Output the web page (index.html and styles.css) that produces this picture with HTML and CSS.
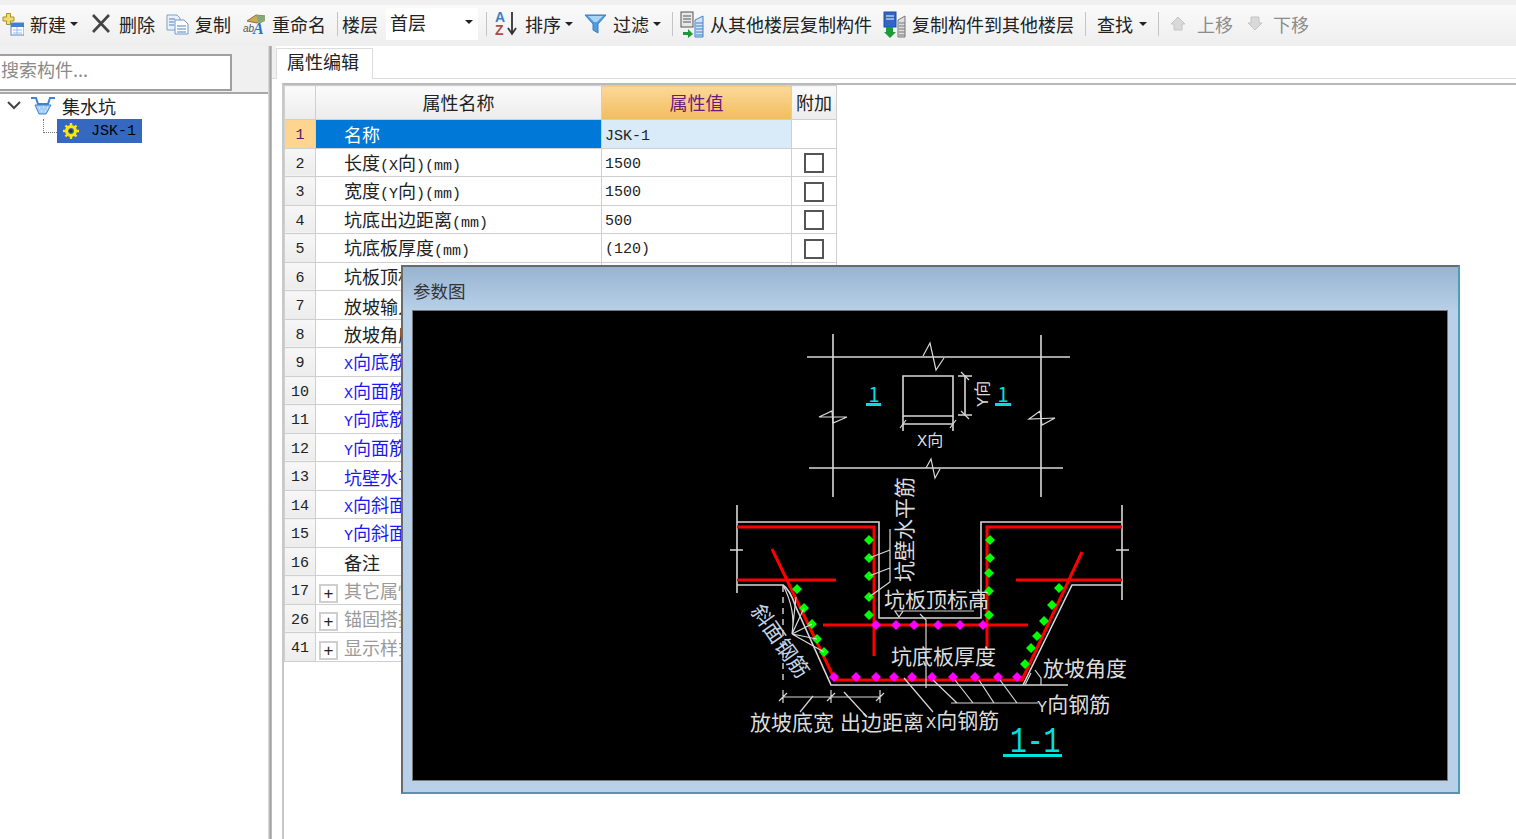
FILE: index.html
```html
<!DOCTYPE html>
<html lang="zh-CN">
<head>
  <meta charset="UTF-8" />
  <title>属性编辑</title>
  <link rel="stylesheet" href="styles.css">
</head>
<body>
  <div class="toolbar">
    <div class="tool">
      <svg width="22" height="26" viewBox="0 0 22 26"><path d="M1 6h3.500V2.500h4V6H12v4H8.500v3.500h-4V10H1z" fill="#f4dc6a" stroke="#a89030"/><rect x="9" y="12" width="13" height="12" fill="#fff" stroke="#5b8ccb"/><rect x="9" y="12" width="13" height="4" fill="#3f83d0"/><path d="M11 19h9M11 22h9M15 16v8" stroke="#9bbbe0"/></svg>
      <span>新建</span><i class="caret"></i>
    </div>
    <div class="tool tool-del">
      <svg width="22" height="26" viewBox="0 0 22 26"><path d="M2 4l16 17M18 4L2 21" stroke="#444" stroke-width="2.6" fill="none"/></svg>
      <span>删除</span>
    </div>
    <div class="tool">
      <svg width="23" height="26" viewBox="0 0 23 26"><path d="M1 4h10l3 3v12H1z" fill="#eaf1fa" stroke="#7da0cc"/><path d="M9 9h9l4 4v10H9z" fill="#fff" stroke="#6f96c8"/><path d="M11 15h9M11 18h9M11 21h9M3 8h6M3 11h5M3 14h5" stroke="#4b83c8"/></svg>
      <span>复制</span>
    </div>
    <div class="tool tool-ren">
      <svg width="23" height="26" viewBox="0 0 23 26"><path d="M4 10l9-6 9 1-8 7z" fill="#cda95a" stroke="#8c7030"/><path d="M13 4l9 1v5l-6 3z" fill="#8aa878"/><text x="0" y="21" class="ico-ab">ab</text><text x="10" y="23" class="ico-a">A</text></svg>
      <span>重命名</span>
    </div>
    <i class="sep"></i>
    <span class="floor-label">楼层</span>
    <div class="floor-select"><span>首层</span><i class="caret"></i></div>
    <i class="sep"></i>
    <div class="tool tool-sort">
      <svg width="25" height="28" viewBox="0 0 25 28"><text x="1" y="12" class="ico-az ico-az-a">A</text><text x="1" y="25" class="ico-az ico-az-z">Z</text><path d="M18 2v21M14 18l4 6 4-6" stroke="#333" stroke-width="1.8" fill="none"/></svg>
      <span>排序</span><i class="caret"></i>
    </div>
    <div class="tool">
      <svg width="23" height="26" viewBox="0 0 23 26"><path d="M1 4h21l-8 9v9l-5-3v-6z" fill="#4f9be0" stroke="#3b7fc4"/><path d="M4 5h15l-6 6h-3z" fill="#a8d4f5"/></svg>
      <span>过滤</span><i class="caret"></i>
    </div>
    <i class="sep sep-tight"></i>
    <div class="tool tool-gap">
      <svg width="24" height="28" viewBox="0 0 24 28"><rect x="1" y="2" width="12" height="15" fill="#e8e8e8" stroke="#555"/><path d="M3 6h8M3 9h8M3 12h8" stroke="#555"/><path d="M3 22h5v-3l5 5-5 4v-3H3z" fill="#1f9a3a"/><path d="M15 10l8-4v21h-8zM16 13h7M16 16h7M16 19h7M16 22h7M16 25h7" fill="#cfe2f5" stroke="#3f83c8"/></svg>
      <span>从其他楼层复制构件</span>
    </div>
    <div class="tool">
      <svg width="23" height="28" viewBox="0 0 23 28"><rect x="1" y="2" width="12" height="15" fill="#2f66c8" stroke="#234f9c"/><path d="M3 6h8M3 9h8" stroke="#fff"/><path d="M3 17h7v5h3l-6 6-6-6h2z" fill="#1f9a3a"/><path d="M15 10l7-4v21h-7zM16 13h6M16 16h6M16 19h6M16 22h6M16 25h6" fill="#ddd" stroke="#777"/></svg>
      <span>复制构件到其他楼层</span>
    </div>
    <i class="sep"></i>
    <div class="tool tool-find"><span>查找</span><i class="caret"></i></div>
    <i class="sep"></i>
    <div class="tool off tool-up">
      <svg width="20" height="26" viewBox="0 0 20 26"><path d="M0 13l7-7 7 7h-3v6H3v-6z" fill="#d9d9d9" stroke="#c4c4c4"/></svg>
      <span>上移</span>
    </div>
    <div class="tool off tool-down">
      <svg width="19" height="26" viewBox="0 0 19 26"><path d="M3 6h8v6h3l-7 7-7-7h3z" fill="#d9d9d9" stroke="#c4c4c4"/></svg>
      <span>下移</span>
    </div>
  </div>

  <div class="main">
    <div class="side">
      <div class="search-row"><div class="search-box">搜索构件...</div></div>
      <div class="tree">
        <div class="tree-root">
          <svg class="tree-arrow" width="14" height="10" viewBox="0 0 14 10"><path d="M1 1l6 6 6-6" stroke="#444" stroke-width="2" fill="none"/></svg>
          <svg width="26" height="24" viewBox="0 0 26 24"><path d="M1 4h5l2 6h10l2-6h5" stroke="#3f83d0" stroke-width="2" fill="none"/><path d="M5 11h16l-5 9H9z" fill="#a9cdf0" stroke="#3f83d0"/><path d="M9 14h1M13 13h1M17 14h1M11 17h1M15 17h1" stroke="#fff"/></svg>
          <span>集水坑</span>
        </div>
        <div class="tree-child">
          <i class="tree-dots"></i>
          <div class="tree-sel">
            <svg width="18" height="18" viewBox="0 0 18 18"><circle cx="9" cy="9" r="4.5" fill="none" stroke="#ffe800" stroke-width="3"/><path d="M9 1v3M9 14v3M1 9h3M14 9h3M3.5 3.5l2 2M12.500 12.500l2 2M14.500 3.500l-2 2M5.500 12.500l-2 2" stroke="#ffe800" stroke-width="2.400"/><circle cx="9" cy="9" r="1.800" fill="#333"/></svg>
            <span class="lat">JSK-1</span>
          </div>
        </div>
      </div>
    </div>
    <div class="splitter"></div>

    <div class="content">
      <div class="tabs"><div class="tab">属性编辑</div></div>
      <div class="sheet">
        <table class="grid">
          <colgroup><col class="c-no"><col class="c-name"><col class="c-val"><col class="c-add"></colgroup>
          <thead>
            <tr><th></th><th>属性名称</th><th class="th-active">属性值</th><th>附加</th></tr>
          </thead>
          <tbody>
            <tr class="row-on"><td class="no">1</td><td class="name">名称</td><td class="val"><span class="lat">JSK-1</span></td><td></td></tr>
            <tr><td class="no">2</td><td class="name">长度<span class="lat">(X</span>向<span class="lat">)(mm)</span></td><td class="val lat">1500</td><td class="chk"><i class="box"></i></td></tr>
            <tr><td class="no">3</td><td class="name">宽度<span class="lat">(Y</span>向<span class="lat">)(mm)</span></td><td class="val lat">1500</td><td class="chk"><i class="box"></i></td></tr>
            <tr><td class="no">4</td><td class="name">坑底出边距离<span class="lat">(mm)</span></td><td class="val lat">500</td><td class="chk"><i class="box"></i></td></tr>
            <tr><td class="no">5</td><td class="name">坑底板厚度<span class="lat">(mm)</span></td><td class="val lat">(120)</td><td class="chk"><i class="box"></i></td></tr>
            <tr><td class="no">6</td><td class="name">坑板顶标高<span class="lat">(m)</span></td><td></td><td></td></tr>
            <tr><td class="no">7</td><td class="name">放坡输入方式</td><td></td><td></td></tr>
            <tr><td class="no">8</td><td class="name">放坡角度</td><td></td><td></td></tr>
            <tr class="blue"><td class="no">9</td><td class="name"><span class="lat">X</span>向底筋</td><td></td><td></td></tr>
            <tr class="blue"><td class="no">10</td><td class="name"><span class="lat">X</span>向面筋</td><td></td><td></td></tr>
            <tr class="blue"><td class="no">11</td><td class="name"><span class="lat">Y</span>向底筋</td><td></td><td></td></tr>
            <tr class="blue"><td class="no">12</td><td class="name"><span class="lat">Y</span>向面筋</td><td></td><td></td></tr>
            <tr class="blue"><td class="no">13</td><td class="name">坑壁水平筋</td><td></td><td></td></tr>
            <tr class="blue"><td class="no">14</td><td class="name"><span class="lat">X</span>向斜面钢筋</td><td></td><td></td></tr>
            <tr class="blue"><td class="no">15</td><td class="name"><span class="lat">Y</span>向斜面钢筋</td><td></td><td></td></tr>
            <tr><td class="no">16</td><td class="name">备注</td><td></td><td></td></tr>
            <tr class="group"><td class="no">17</td><td class="name-g"><i class="plus">+</i>其它属性</td><td></td><td></td></tr>
            <tr class="group"><td class="no">26</td><td class="name-g"><i class="plus">+</i>锚固搭接</td><td></td><td></td></tr>
            <tr class="group"><td class="no">41</td><td class="name-g"><i class="plus">+</i>显示样式</td><td></td><td></td></tr>
          </tbody>
        </table>
      </div>
    </div>
  </div>

  <!-- 参数图 floats over the grid -->
  <div class="dialog">
    <div class="dialog-title">参数图</div>
    <div class="canvas">
      <svg width="1034" height="470" viewBox="413 311 1034 470">
        <g class="w1">
          <path d="M807 357H1070M809 468H1063M833 334V497M1041 335V497"/>
          <path d="M903 376H953V416H903Z"/>
          <path d="M903 416V431M953 416V431M903 424H953M958 376H972M958 415H972M965 376V415"/>
        </g>
        <g class="w2">
          <path d="M923 356L930 343L936 370L944 358M926 468L931 459L935 478L940 469"/>
          <path d="M819 417L832 411L833 423L847 417ZM1029 419L1040 411L1042 425L1055 418Z"/>
          <path d="M900 428L906 420M950 428L956 420M961 372L969 380M961 411L969 419"/>
        </g>
        <text x="917" y="446" class="t16"><tspan class="lat-cad">X</tspan>向</text>
        <text transform="translate(988 407) rotate(-90)" class="t16"><tspan class="lat-cad">Y</tspan>向</text>

        <text x="874" y="402" class="cyan t20" text-anchor="middle">1</text>
        <rect x="866" y="403" width="15" height="3" class="cyan-f"/>
        <text x="1003" y="402" class="cyan t20" text-anchor="middle">1</text>
        <rect x="995" y="403" width="16" height="3" class="cyan-f"/>

        <!-- concrete outline -->
        <g class="w1">
          <path d="M737 505V593M1122 505V600M730 550H743M1116 550H1129"/>
          <path d="M737 522H879V618H981V522H1122"/>
          <path d="M737 585H783Q790 590 795 605L831 685H1068M1023 685L1072 585H1122"/>
        </g>
        <path class="dash" d="M783 586V685"/>

        <!-- rebar -->
        <g class="red">
          <path d="M737 527H874V656M737 580H836M772 549L835 680H1022L1082 552"/>
          <path d="M823 625H1028M1122 527H987V648M1016 580H1122"/>
        </g>

        <g class="green">
          <path d="M869 535l5 5-5 5-5-5zM869 553l5 5-5 5-5-5zM869 571l5 5-5 5-5-5zM869 592l5 5-5 5-5-5zM869 610l5 5-5 5-5-5z"/>
          <path d="M797 584l5 5-5 5-5-5zM804 603l5 5-5 5-5-5zM812 619l5 5-5 5-5-5zM817 634l5 5-5 5-5-5zM824 647l5 5-5 5-5-5z"/>
          <path d="M990 535l5 5-5 5-5-5zM990 553l5 5-5 5-5-5zM989 568l5 5-5 5-5-5zM989 586l5 5-5 5-5-5zM989 610l5 5-5 5-5-5z"/>
          <path d="M1059 583l5 5-5 5-5-5zM1052 600l5 5-5 5-5-5zM1044 616l5 5-5 5-5-5zM1037 631l5 5-5 5-5-5zM1031 643l5 5-5 5-5-5zM1025 659l5 5-5 5-5-5z"/>
        </g>
        <g class="pink">
          <path d="M876 620l5 5-5 5-5-5zM896 620l5 5-5 5-5-5zM914 620l5 5-5 5-5-5zM938 620l5 5-5 5-5-5zM960 620l5 5-5 5-5-5zM983 620l5 5-5 5-5-5z"/>
          <path d="M834 672l5 5-5 5-5-5zM856 672l5 5-5 5-5-5zM876 672l5 5-5 5-5-5zM894 672l5 5-5 5-5-5zM912 672l5 5-5 5-5-5zM932 672l5 5-5 5-5-5zM953 672l5 5-5 5-5-5zM975 672l5 5-5 5-5-5zM998 672l5 5-5 5-5-5zM1017 672l5 5-5 5-5-5z"/>
        </g>

        <!-- leaders and dimensions -->
        <g class="w2">
          <path d="M890 529V582L869 597M890 550L869 558M890 568L869 576"/>
          <path d="M895 611H974M895 611L903 611L899 617ZM920 614L926 620V688"/>
          <path d="M792 634L796 597M792 634L804 608M792 634L812 624M792 634L817 639M792 634L824 652M783 585Q796 610 792 634"/>
          <path d="M783 697H880M783 690V703M831 690V703M880 690V703M779 701L787 693M827 701L835 693M876 701L884 693"/>
          <path d="M800 712L813 696M867 717L844 692"/>
          <path d="M904 678L933 712M951 703H1038M933 680L957 703M955 680L973 703M979 680L994 703M1000 680L1017 703"/>
          <path d="M1035 670L1041 678V685M1025 685L1031 673"/>
        </g>

        <text transform="translate(912 582) rotate(-90)" class="t21">坑壁水平筋</text>
        <text x="884" y="607" class="t21">坑板顶标高</text>
        <text x="891" y="664" class="t21">坑底板厚度</text>
        <text x="1043" y="676" class="t21">放坡角度</text>
        <text x="1037" y="712" class="t21"><tspan class="lat-cad">Y</tspan>向钢筋</text>
        <text x="926" y="728" class="t21"><tspan class="lat-cad">X</tspan>向钢筋</text>
        <text x="750" y="730" class="t21">放坡底宽</text>
        <text x="840" y="730" class="t21">出边距离</text>
        <text transform="translate(750 611) rotate(55)" class="t21 slant">斜面钢筋</text>
        <text transform="translate(1010 752) scale(1 1.35)" class="cyan t-title">1-1</text>
        <rect x="1003" y="754" width="59" height="3" class="cyan-f"/>
      </svg>
    </div>
  </div>
</body>
</html>
```

FILE: styles.css
```css
* { margin:0; padding:0; box-sizing:border-box; }
html, body { height:100%; overflow:hidden; }
body {
  background:#fff;
  color:#222;
  font-family:"Noto Sans CJK SC","Liberation Sans",sans-serif;
  font-size:18px;
  line-height:1;
}
i { font-style:normal; }
.lat { font-family:"Liberation Mono","Noto Sans CJK SC",monospace; font-size:15px; }

/* toolbar */
.toolbar {
  height:41px;
  margin-top:5px;
  padding:0 0 3px 2px;
  display:flex;
  align-items:center;
  gap:11px;
  background:linear-gradient(#fafafa,#eeeeee);
  box-shadow:0 -5px 0 #f0f0f0;
}
.tool { display:flex; align-items:center; gap:6px; white-space:nowrap; flex:none; }
.tool svg { flex:none; }
.tool .caret { margin-left:-2px; }
.tool-del { margin-left:2px; }
.tool-ren { margin-left:1px; }
.tool-sort { margin-left:-4px; }
.tool-gap { margin-left:-3px; }
.tool-find .caret { margin-left:0; }
.tool-up { margin-left:1px; }
.tool-down { margin-left:4px; }
.off { color:#8c8c8c; }
.caret {
  width:0; height:0;
  border-left:4px solid transparent;
  border-right:4px solid transparent;
  border-top:4px solid #222;
}
.sep { width:1px; height:24px; background:#c4c4c4; flex:none; }
.sep-tight { margin-right:-1px; }
.floor-label { margin-left:-7px; flex:none; }
.floor-select {
  width:92px; height:32px;
  margin-left:-3px; margin-right:-3px;
  background:#fff;
  display:flex; align-items:center; justify-content:space-between;
  padding:0 5px 4px 4px;
  flex:none;
}
.ico-ab { font:italic 10px "Liberation Sans",sans-serif; fill:#555; }
.ico-a { font:italic bold 16px "Liberation Serif",serif; fill:#2f6fc8; }
.ico-az { font:bold 14px "Liberation Sans",sans-serif; }
.ico-az-a { fill:#3f7fc8; }
.ico-az-z { fill:#b04a4a; }

/* main panes */
.main { display:flex; height:793px; }
.side { width:268px; flex:none; }
.search-row { height:48px; padding-top:8px; background:#f0f0f0; border-bottom:2px solid #a8a8a8; }
.search-box {
  width:232px; height:37px;
  background:#fff;
  border:2px solid #a0a0a0;
  border-left:0;
  color:#8a8a8a;
  padding-left:1px;
  line-height:26px;
}
.tree-root { display:flex; align-items:center; height:24px; padding-left:7px; }
.tree-arrow { margin-right:9px; }
.tree-root span { margin-left:6px; }
.tree-child { display:flex; height:24px; margin-top:1px; padding-left:43px; }
.tree-dots {
  width:14px; height:14px;
  border-left:1px dotted #777;
  border-bottom:1px dotted #777;
}
.tree-sel {
  width:85px; height:24px;
  background:#3568c0;
  color:#000;
  display:flex; align-items:center; gap:11px;
  padding-left:5px;
}
.splitter { width:4px; flex:none; background:linear-gradient(90deg,#e4e4e4,#a0a0a0 60%,#c8c8c8); }
.content { flex:1; display:flex; flex-direction:column; background:#fff; }

/* tab strip */
.tabs {
  height:33px;
  padding:2px 0 0 4px;
  background:linear-gradient(90deg,#f0f0f0 4px,#fff 4px);
  border-bottom:1px solid #dcdcdc;
}
.tab {
  width:97px; height:31px;
  background:#fff;
  border:1px solid #dcdcdc;
  border-bottom:0;
  padding:3px 0 0 10px;
}
.sheet {
  flex:1;
  margin:4px 0 0 10px;
  border-top:2px solid #b8b8c0;
  border-left:2px solid #c8c8c8;
}

/* property grid */
.grid { border-collapse:collapse; table-layout:fixed; width:552px; }
.c-no { width:31px; }
.c-name { width:286px; }
.c-val { width:190px; }
.c-add { width:45px; }
.grid th, .grid td { border:1px solid #cfcfcf; }
.grid th {
  height:34px;
  padding-bottom:2px;
  font-weight:normal;
  background:linear-gradient(#fbfbfb,#ececec);
}
.grid .th-active {
  color:#6a1a7a;
  background:linear-gradient(#fbd89a,#f2bd5c);
}
.grid td { height:28.5px; }
.grid .no {
  padding-top:4px;
  text-align:center;
  font-family:"Liberation Mono",monospace;
  font-size:15px;
  background:linear-gradient(#f7f7f7,#ececec);
}
.name { padding:2px 0 0 28px; }
.name-g { padding:4px 0 0 3px; color:#9a9a9a; }
.val { padding:4px 0 0 3px; }
.grid .row-on .no { background:#fdd58e; color:#5a1a5a; }
.row-on .name { background:#0078d7; color:#fff; padding-top:0; }
.row-on .val { background:#d9eaf8; padding-top:0; }
.blue .name { color:#1a1af0; }
.chk { text-align:center; }
.box {
  display:inline-block;
  width:20px; height:20px;
  border:2px solid #555;
  background:#fff;
  vertical-align:middle;
}
.plus {
  display:inline-block;
  width:19px; height:19px;
  margin-right:6px;
  border:2px solid #cfcfcf;
  color:#222;
  font:17px/15px "Liberation Sans",sans-serif;
  text-align:center;
  vertical-align:-1px;
}

/* dialog with the parameter drawing */
.dialog {
  position:absolute;
  left:401px; top:265px;
  width:1059px; height:529px;
  padding:0 11px 12px 10px;
  background:#b8d0e8;
  border:2px solid #6a6a6a;
  border-right-color:#4aa0b0;
  border-bottom-color:#5a90b0;
  display:flex;
  flex-direction:column;
}
.dialog-title {
  height:44px;
  margin:0 -11px 0 -10px;
  padding:15px 0 0 10px;
  color:#333;
  font-size:17.500px;
  background:linear-gradient(#98b4d0,#b8d0e8);
  flex:none;
}
.canvas { flex:1; background:#000; overflow:hidden; box-shadow:0 0 0 1px #777; }
.canvas svg { display:block; }

/* drawing */
.w1 path { fill:none; stroke:#d8d8d8; stroke-width:1.6; }
.w2 path { fill:none; stroke:#d8d8d8; stroke-width:1.2; }
.dash { fill:none; stroke:#d8d8d8; stroke-width:1.4; stroke-dasharray:6 5; }
.red path { fill:none; stroke:#f00; stroke-width:3; }
.green path { fill:#00ff00; }
.pink path { fill:#ff00ff; }
.cyan-f, .canvas .cyan { fill:#00e0e0; }
.canvas text { font-family:"Noto Sans CJK SC",sans-serif; fill:#dcdcdc; }
.t16 { font-size:16px; }
.t20 { font-size:20px; }
.t21 { font-size:21px; }
.canvas .slant { fill:#c4d4e8; }
.lat-cad { font-family:"Liberation Mono",monospace; font-size:17px; }
.canvas .t-title { font-family:"Liberation Mono",monospace; font-size:28px; }
```
